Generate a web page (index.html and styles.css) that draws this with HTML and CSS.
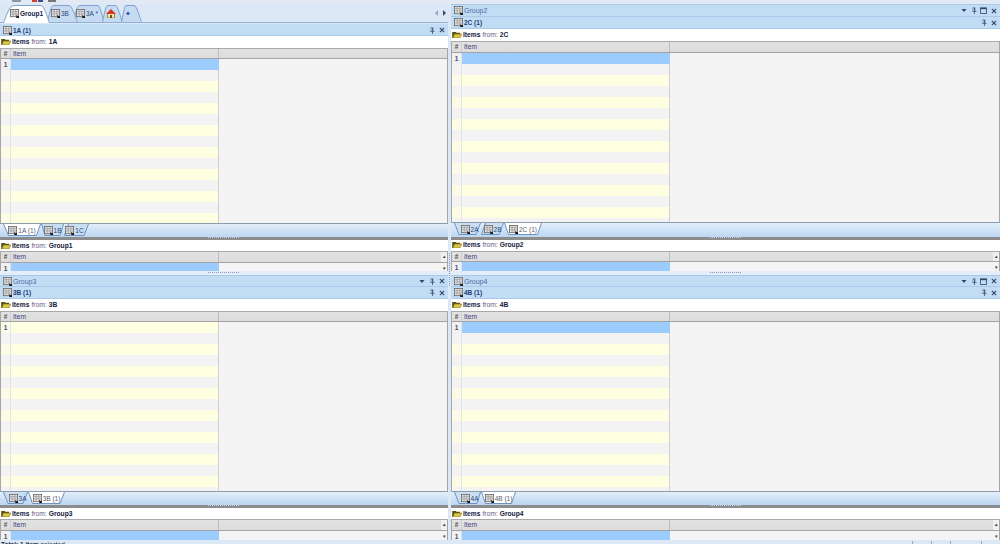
FILE: index.html
```html
<!DOCTYPE html>
<html lang="en">
<head>
<meta charset="utf-8">
<title>Groups</title>
<link rel="stylesheet" href="styles.css">
</head>
<body>
<svg class="defs">
  <symbol id="doc" viewBox="0 0 10 10">
    <rect x=".5" y=".5" width="9" height="8" fill="#e8e8e8" stroke="#6c6c6c"/>
    <path d="M.5 3h9M.5 5.500h9M3.500 .5v8M6.500 .5v8" stroke="#a2a2a2" fill="none"/>
    <path d="M7 7h1v1h2v2H7z" fill="#111"/>
  </symbol>
  <symbol id="folder" viewBox="0 0 11 8">
    <path d="M0 1h4l1 1h4v2H3L1 8H0z" fill="#5a5410"/>
    <path d="M2.500 3.500H11L8.800 8H.8z" fill="#d9c64a" stroke="#6b6215" stroke-width=".6"/>
  </symbol>
  <symbol id="pin" viewBox="0 0 7 8"><path d="M2 .5h3v4h1.500v1h-2V8h-1V5.500h-2v-1H2z" fill="#46597c"/><path d="M3 1.500v3" stroke="#c2dcf4"/></symbol>
  <symbol id="close" viewBox="0 0 7 7"><path d="M1 1l5 5M6 1L1 6" stroke="#34496e" stroke-width="1.300" fill="none"/></symbol>
  <symbol id="drop" viewBox="0 0 7 4"><path d="M0 0h7L3.500 4z" fill="#34496e"/></symbol>
  <symbol id="max" viewBox="0 0 8 8"><path d="M.5 1.500h7v6h-7z" fill="none" stroke="#34496e"/><path d="M0 1.500h8" stroke="#34496e" stroke-width="2"/></symbol>
</svg>

<div class="topbar">
  <span class="tool t1"></span><span class="tool t2"></span><span class="tool t3"></span><span class="tool t4"></span>
</div>

<main class="main">
  <div class="col col-left">
    <div class="strip">
      <div class="tab tab-group1 active">
        <svg class="shape" viewBox="0 0 47 18"><path d="M.5 18C3 12 6 .5 11 .5H38C41 .5 44 11 46.500 18"/></svg>
        <svg class="ico"><use href="#doc"/></svg><span class="tab-bold">Group1</span>
      </div>
      <div class="tab tab-3b">
        <svg class="shape" viewBox="0 0 31 17"><path d="M.5 17C2 12 3 .5 7 .5H22C25 .5 28 11 30.500 17"/></svg>
        <svg class="ico"><use href="#doc"/></svg><span>3B</span>
      </div>
      <div class="tab tab-3a">
        <svg class="shape" viewBox="0 0 32 17"><path d="M.5 17C2 12 3 .5 7 .5H25C27 .5 29 11 31.500 17"/></svg>
        <svg class="ico"><use href="#doc"/></svg><span>3A *</span>
      </div>
      <div class="tab tab-home">
        <svg class="shape" viewBox="0 0 21 17"><path d="M.5 17C2 12 3 .5 6 .5H13C16 .5 18 11 20.500 17"/></svg>
        <svg class="home" viewBox="0 0 10 9"><path d="M1.500 4.500V9h7V4.500z" fill="#f4e7a8" stroke="#7c6a1f" stroke-width=".7"/><path d="M0 5l5-5 5 5z" fill="#d8351f"/><path d="M4 6h2v3H4z" fill="#69541a"/></svg>
      </div>
      <div class="tab tab-plus">
        <svg class="shape" viewBox="0 0 21 17"><path d="M.5 17C2 12 3 .5 5 .5H13C16 .5 18 11 20.500 17"/></svg>
        <span class="plus">✦</span>
      </div>
      <div class="nav"><span class="arrow-l"></span><span class="arrow-r"></span></div>
    </div>

    <section class="pane pane-a">
      <div class="band"><svg class="ico"><use href="#doc"/></svg><span class="title">1A (1)</span><div class="btns"><svg class="b-pin"><use href="#pin"/></svg><svg class="b-x"><use href="#close"/></svg></div></div>
      <div class="items"><svg class="fld"><use href="#folder"/></svg><b>Items</b><span class="from">from:</span><b>1A</b></div>
      <div class="grid rows-a">
        <div class="head"><span class="h-idx">#</span><span class="h-item">Item</span><span class="h-rest"></span></div>
        <div class="row sel"><span class="idx">1</span><span class="cell"></span></div>
        <div class="row g"><span class="idx"></span><span class="cell"></span></div>
        <div class="row y"><span class="idx"></span><span class="cell"></span></div>
        <div class="row g"><span class="idx"></span><span class="cell"></span></div>
        <div class="row y"><span class="idx"></span><span class="cell"></span></div>
        <div class="row g"><span class="idx"></span><span class="cell"></span></div>
        <div class="row y"><span class="idx"></span><span class="cell"></span></div>
        <div class="row g"><span class="idx"></span><span class="cell"></span></div>
        <div class="row y"><span class="idx"></span><span class="cell"></span></div>
        <div class="row g"><span class="idx"></span><span class="cell"></span></div>
        <div class="row y"><span class="idx"></span><span class="cell"></span></div>
        <div class="row g"><span class="idx"></span><span class="cell"></span></div>
        <div class="row y"><span class="idx"></span><span class="cell"></span></div>
        <div class="row g"><span class="idx"></span><span class="cell"></span></div>
        <div class="row y"><span class="idx"></span><span class="cell"></span></div>
      </div>
      <div class="dtabs">
        <div class="dtab active w38"><svg class="dshape" viewBox="0 0 38 12"><path d="M.5 0L5.500 11.500H33.500L37.500 0"/></svg><svg class="ico"><use href="#doc"/></svg><span>1A (1)</span></div>
        <div class="dtab w23"><svg class="dshape" viewBox="0 0 23 12"><path d="M.5 0L4 11.500H19L22.500 0"/></svg><svg class="ico"><use href="#doc"/></svg><span>1B</span></div>
        <div class="dtab w25 shift-l"><svg class="dshape" viewBox="0 0 25 12"><path d="M4.500 0L.5 11.500H20L24.500 0"/></svg><svg class="ico"><use href="#doc"/></svg><span>1C</span></div>
      </div>
      <div class="thick"><span class="dots"></span></div>
      <div class="items"><svg class="fld"><use href="#folder"/></svg><b>Items</b><span class="from">from:</span><b>Group1</b></div>
      <div class="grid rows-low">
        <div class="head"><span class="h-idx">#</span><span class="h-item">Item</span><span class="h-rest"></span><span class="h-scroll">▴</span></div>
        <div class="row sel"><span class="idx">1</span><span class="cell"></span><span class="r-scroll">▾</span></div>
      </div>
    </section>

    <div class="hsplit"><span class="dots"></span></div>

    <section class="pane pane-b">
      <div class="band band-group"><svg class="ico"><use href="#doc"/></svg><span class="gname">Group3</span><div class="btns"><svg class="b-drop"><use href="#drop"/></svg><svg class="b-pin"><use href="#pin"/></svg><svg class="b-x"><use href="#close"/></svg></div></div>
      <div class="band"><svg class="ico"><use href="#doc"/></svg><span class="title">3B (1)</span><div class="btns"><svg class="b-pin"><use href="#pin"/></svg><svg class="b-x"><use href="#close"/></svg></div></div>
      <div class="items"><svg class="fld"><use href="#folder"/></svg><b>Items</b><span class="from">from:</span><b>3B</b></div>
      <div class="grid rows-b">
        <div class="head"><span class="h-idx">#</span><span class="h-item">Item</span><span class="h-rest"></span></div>
        <div class="row y"><span class="idx">1</span><span class="cell"></span></div>
        <div class="row g"><span class="idx"></span><span class="cell"></span></div>
        <div class="row y"><span class="idx"></span><span class="cell"></span></div>
        <div class="row g"><span class="idx"></span><span class="cell"></span></div>
        <div class="row y"><span class="idx"></span><span class="cell"></span></div>
        <div class="row g"><span class="idx"></span><span class="cell"></span></div>
        <div class="row y"><span class="idx"></span><span class="cell"></span></div>
        <div class="row g"><span class="idx"></span><span class="cell"></span></div>
        <div class="row y"><span class="idx"></span><span class="cell"></span></div>
        <div class="row g"><span class="idx"></span><span class="cell"></span></div>
        <div class="row y"><span class="idx"></span><span class="cell"></span></div>
        <div class="row g"><span class="idx"></span><span class="cell"></span></div>
        <div class="row y"><span class="idx"></span><span class="cell"></span></div>
        <div class="row g"><span class="idx"></span><span class="cell"></span></div>
        <div class="row y"><span class="idx"></span><span class="cell"></span></div>
        <div class="row g"><span class="idx"></span><span class="cell"></span></div>
      </div>
      <div class="dtabs">
        <div class="dtab w25 shift-r"><svg class="dshape" viewBox="0 0 25 12"><path d="M.5 0L5 11.500H20L24.500 0"/></svg><svg class="ico"><use href="#doc"/></svg><span>3A</span></div>
        <div class="dtab active w37"><svg class="dshape" viewBox="0 0 37 12"><path d="M.5 0L4.500 11.500H32L36.500 0"/></svg><svg class="ico"><use href="#doc"/></svg><span>3B (1)</span></div>
      </div>
      <div class="thick"><span class="dots"></span></div>
      <div class="items"><svg class="fld"><use href="#folder"/></svg><b>Items</b><span class="from">from:</span><b>Group3</b></div>
      <div class="grid rows-low">
        <div class="head"><span class="h-idx">#</span><span class="h-item">Item</span><span class="h-rest"></span><span class="h-scroll">▴</span></div>
        <div class="row sel"><span class="idx">1</span><span class="cell"></span><span class="r-scroll">▾</span></div>
      </div>
    </section>
  </div>

  <div class="vsplit"><span class="vdots"></span></div>

  <div class="col col-right">
    <section class="pane pane-c">
      <div class="band band-group"><svg class="ico"><use href="#doc"/></svg><span class="gname">Group2</span><div class="btns"><svg class="b-drop"><use href="#drop"/></svg><svg class="b-pin"><use href="#pin"/></svg><svg class="b-max"><use href="#max"/></svg><svg class="b-x"><use href="#close"/></svg></div></div>
      <div class="band"><svg class="ico"><use href="#doc"/></svg><span class="title">2C (1)</span><div class="btns"><svg class="b-pin"><use href="#pin"/></svg><svg class="b-x"><use href="#close"/></svg></div></div>
      <div class="items"><svg class="fld"><use href="#folder"/></svg><b>Items</b><span class="from">from:</span><b>2C</b></div>
      <div class="grid rows-c">
        <div class="head"><span class="h-idx">#</span><span class="h-item">Item</span><span class="h-rest"></span></div>
        <div class="row sel"><span class="idx">1</span><span class="cell"></span></div>
        <div class="row g"><span class="idx"></span><span class="cell"></span></div>
        <div class="row y"><span class="idx"></span><span class="cell"></span></div>
        <div class="row g"><span class="idx"></span><span class="cell"></span></div>
        <div class="row y"><span class="idx"></span><span class="cell"></span></div>
        <div class="row g"><span class="idx"></span><span class="cell"></span></div>
        <div class="row y"><span class="idx"></span><span class="cell"></span></div>
        <div class="row g"><span class="idx"></span><span class="cell"></span></div>
        <div class="row y"><span class="idx"></span><span class="cell"></span></div>
        <div class="row g"><span class="idx"></span><span class="cell"></span></div>
        <div class="row y"><span class="idx"></span><span class="cell"></span></div>
        <div class="row g"><span class="idx"></span><span class="cell"></span></div>
        <div class="row y"><span class="idx"></span><span class="cell"></span></div>
        <div class="row g"><span class="idx"></span><span class="cell"></span></div>
        <div class="row y"><span class="idx"></span><span class="cell"></span></div>
        <div class="row g"><span class="idx"></span><span class="cell"></span></div>
      </div>
      <div class="dtabs">
        <div class="dtab w27 shift-r"><svg class="dshape" viewBox="0 0 27 12"><path d="M.5 0L5 11.500H22L26.500 0"/></svg><svg class="ico"><use href="#doc"/></svg><span>2A</span></div>
        <div class="dtab w23"><svg class="dshape" viewBox="0 0 23 12"><path d="M4.500 0L.5 11.500H18L22.500 0"/></svg><svg class="ico"><use href="#doc"/></svg><span>2B</span></div>
        <div class="dtab active w38"><svg class="dshape" viewBox="0 0 38 12"><path d="M.5 0L4.500 11.500H33.500L37.500 0"/></svg><svg class="ico"><use href="#doc"/></svg><span>2C (1)</span></div>
      </div>
      <div class="thick"><span class="dots"></span></div>
      <div class="items"><svg class="fld"><use href="#folder"/></svg><b>Items</b><span class="from">from:</span><b>Group2</b></div>
      <div class="grid rows-low">
        <div class="head"><span class="h-idx">#</span><span class="h-item">Item</span><span class="h-rest"></span><span class="h-scroll">▴</span></div>
        <div class="row sel"><span class="idx">1</span><span class="cell"></span><span class="r-scroll">▾</span></div>
      </div>
    </section>

    <div class="hsplit"><span class="dots"></span></div>

    <section class="pane pane-b">
      <div class="band band-group"><svg class="ico"><use href="#doc"/></svg><span class="gname">Group4</span><div class="btns"><svg class="b-drop"><use href="#drop"/></svg><svg class="b-pin"><use href="#pin"/></svg><svg class="b-max"><use href="#max"/></svg><svg class="b-x"><use href="#close"/></svg></div></div>
      <div class="band"><svg class="ico"><use href="#doc"/></svg><span class="title">4B (1)</span><div class="btns"><svg class="b-pin"><use href="#pin"/></svg><svg class="b-x"><use href="#close"/></svg></div></div>
      <div class="items"><svg class="fld"><use href="#folder"/></svg><b>Items</b><span class="from">from:</span><b>4B</b></div>
      <div class="grid rows-b">
        <div class="head"><span class="h-idx">#</span><span class="h-item">Item</span><span class="h-rest"></span></div>
        <div class="row sel"><span class="idx">1</span><span class="cell"></span></div>
        <div class="row g"><span class="idx"></span><span class="cell"></span></div>
        <div class="row y"><span class="idx"></span><span class="cell"></span></div>
        <div class="row g"><span class="idx"></span><span class="cell"></span></div>
        <div class="row y"><span class="idx"></span><span class="cell"></span></div>
        <div class="row g"><span class="idx"></span><span class="cell"></span></div>
        <div class="row y"><span class="idx"></span><span class="cell"></span></div>
        <div class="row g"><span class="idx"></span><span class="cell"></span></div>
        <div class="row y"><span class="idx"></span><span class="cell"></span></div>
        <div class="row g"><span class="idx"></span><span class="cell"></span></div>
        <div class="row y"><span class="idx"></span><span class="cell"></span></div>
        <div class="row g"><span class="idx"></span><span class="cell"></span></div>
        <div class="row y"><span class="idx"></span><span class="cell"></span></div>
        <div class="row g"><span class="idx"></span><span class="cell"></span></div>
        <div class="row y"><span class="idx"></span><span class="cell"></span></div>
        <div class="row g"><span class="idx"></span><span class="cell"></span></div>
      </div>
      <div class="dtabs">
        <div class="dtab w27 shift-r"><svg class="dshape" viewBox="0 0 27 12"><path d="M.5 0L5 11.500H23L26.500 0"/></svg><svg class="ico"><use href="#doc"/></svg><span>4A</span></div>
        <div class="dtab active w35"><svg class="dshape" viewBox="0 0 35 12"><path d="M.5 0L4.500 11.500H30.500L34.500 0"/></svg><svg class="ico"><use href="#doc"/></svg><span>4B (1)</span></div>
      </div>
      <div class="thick"><span class="dots"></span></div>
      <div class="items"><svg class="fld"><use href="#folder"/></svg><b>Items</b><span class="from">from:</span><b>Group4</b></div>
      <div class="grid rows-low">
        <div class="head"><span class="h-idx">#</span><span class="h-item">Item</span><span class="h-rest"></span><span class="h-scroll">▴</span></div>
        <div class="row sel"><span class="idx">1</span><span class="cell"></span><span class="r-scroll">▾</span></div>
      </div>
    </section>
  </div>
</main>

<footer class="status">
  <span class="st-text"><b>Total: 1 item</b> selected</span>
  <span class="st-cell c1"></span><span class="st-cell c2"></span><span class="st-cell c3"></span><span class="st-cell c4"></span>
</footer>
</body>
</html>
```

FILE: styles.css
```css
* { box-sizing: border-box; }
html, body { margin: 0; height: 544px; overflow: hidden; }
body {
  background: #dce8f6;
  font-family: "Liberation Sans", Arial, sans-serif;
  font-size: 6.5px;
  line-height: 11px;
  color: #1b2a4a;
  display: flex;
  flex-direction: column;
}
.defs { display: none; }
svg { display: block; }

.topbar { height: 4px; flex: none; display: flex; padding-left: 12px; gap: 5px; background: #e1e9f5; overflow: hidden; }
.tool { width: 9px; height: 2px; background: #8b97a8; }
.t2 { width: 5px; background: #d33b3b; margin-left: 6px; }
.t3 { width: 5px; background: #3a4f86; margin-left: -4px; }
.t4 { width: 8px; background: #777; }

.main { flex: none; height: 537px; display: flex; overflow: hidden; }
.col { display: flex; flex-direction: column; }
.col-left { width: 448px; flex: none; }
.col-right { flex: 1; min-width: 0; }
.vsplit { width: 3px; flex: none; background: #dce8f6; padding: 249px 1px 0; }
.vdots { display: block; width: 1px; height: 34px; background: repeating-linear-gradient(#7f9cc4 0 1px, transparent 1px 2px); }

/* main tab strip */
.strip { height: 19px; flex: none; display: flex; align-items: flex-end; padding-left: 3px; border-bottom: 1px solid #8fb0d8; margin-bottom: 1px; }
.tab { height: 17px; flex: none; display: flex; align-items: center; position: relative; color: #2c4a7a; padding-bottom: 1px; }
.tab > * { position: relative; }
.tab .shape { position: absolute; left: 0; top: 0; width: 100%; height: 100%; }
.shape path { fill: #c6dbf2; stroke: #7ea2cc; stroke-width: 1; }
.tab.active .shape path { fill: #fff; }
.tab.active { z-index: 2; margin-bottom: -1px; height: 18px; color: #13233f; padding-bottom: 2px; }
.tab-bold { font-weight: bold; }
.tab .ico { width: 9px; height: 9px; margin-right: 1px; }
.tab-group1 { width: 47px; padding-left: 7px; }
.tab-3b { width: 31px; margin-left: -3px; padding-left: 4px; z-index: 1; }
.tab-3a { width: 32px; margin-left: -5px; padding-left: 3px; }
.tab-home { width: 21px; margin-left: -3px; padding-left: 4px; }
.home { width: 10px; height: 9px; }
.tab-plus { width: 21px; margin-left: -2px; padding-left: 4px; }
.plus { color: #1d3fa8; font-size: 7px; }
.nav { margin-left: auto; margin-right: 2px; align-self: center; display: flex; gap: 5px; }
.arrow-l { width: 0; height: 0; border: 3px solid transparent; border-left: 0; border-right: 3px solid #9aa6b7; }
.arrow-r { width: 0; height: 0; border: 3px solid transparent; border-right: 0; border-left: 3px solid #34496e; }

/* panes */
.pane { flex: none; display: flex; flex-direction: column; overflow: hidden; }
.pane-a { height: 247px; }
.pane-b { height: 266px; }
.pane-c { height: 267px; }
.band { height: 12px; flex: none; display: flex; align-items: center; background: #c2dcf4; border-bottom: 1px solid #a9c9ea; padding: 0 2px 0 3px; }
.pane-a .band { padding-top: 1px; }
.band-group { border-top: 1px solid #a9c9ea; }
.pane-c .band-group { height: 13px; }
.band .ico { width: 9px; height: 9px; margin-right: 1px; }
.title { font-weight: bold; color: #1f3f78; }
.gname { color: #4a6ca5; font-size: 7px; }
.btns { margin-left: auto; display: flex; align-items: center; }
.btns svg { flex: none; }
.b-drop { width: 6px; height: 3px; margin-right: 4px; }
.b-pin { width: 6px; height: 7px; margin-right: 3px; }
.b-max { width: 7px; height: 7px; margin-right: 3px; }
.b-x { width: 6px; height: 6px; margin-right: 1px; margin-left: 1px; }

.items { height: 12px; flex: none; display: flex; align-items: center; background: #fff; gap: 2px; padding: 0 0 1px 1px; color: #12203c; font-size: 6.7px; }
.thick + .items { height: 11px; padding-bottom: 0; }
.pane-c .thick + .items { padding-bottom: 2px; }
.fld { width: 10px; height: 7px; margin-right: -1px; }
.from { color: #6a557f; }

.grid { flex: none; overflow: hidden; border-left: 1px solid #a6a6a6; border-right: 1px solid #a6a6a6; background: #f4f4f4; }
.rows-a { height: 176px; border-bottom: 1px solid #8d9bab; }
.rows-b { height: 181px; border-bottom: 1px solid #8d9bab; }
.rows-c { height: 182px; border-bottom: 1px solid #8d9bab; }
.rows-low { height: 20px; }
.pane-b .rows-low { height: 21px; }
.head { height: 11px; flex: none; display: flex; background: linear-gradient(#e2e2e2, #dcdcdc); border-top: 1px solid #a9a9a9; border-bottom: 1px solid #a3a3a3; }
.pane-c .rows-c .head, .pane-a .rows-low .head, .pane-b .rows-low .head { height: 12px; }
.head span { display: block; line-height: 9px; }
.h-idx { width: 10px; flex: none; text-align: center; font-weight: bold; color: #4d4d4d; border-right: 1px solid #cfcfcf; }
.h-item { width: 208px; flex: none; padding-left: 2px; color: #473c80; border-right: 1px solid #bdbdbd; font-size: 6.7px; }
.h-rest { flex: 1; }
.h-scroll { width: 6px; flex: none; font-size: 5px; color: #333; background: #f0f0f0; text-align: center; }
.row { height: 11px; display: flex; }
.idx { width: 10px; flex: none; text-align: center; color: #3a4f78; font-weight: bold; border-right: 1px solid #e3e3e3; }
.cell { width: 208px; flex: none; border-right: 1px solid #d0d0d0; }
.r-scroll { margin-left: auto; width: 6px; font-size: 5px; color: #333; text-align: center; background: #f4f4f4; }
.sel .cell { background: #9ccbfd; border-right-color: #9ccbfd; }
.sel .idx { background: #f0f0f0; }
.g .cell, .g .idx { background: #f3f3f3; }
.y .cell { background: #fefee0; }
.y .idx { background: #fbfbe6; }

/* document tabs */
.dtabs { height: 13px; flex: none; display: flex; padding-left: 3px; background: linear-gradient(#e3eefa, #bcd6f1); }
.pane-c .dtabs { height: 14px; }
.dtab { height: 12px; flex: none; display: flex; align-items: center; justify-content: center; gap: 1px; position: relative; color: #2c4a7a; }
.dtab > * { position: relative; }
.dtab .dshape { position: absolute; left: 0; top: 0; width: 100%; height: 100%; }
.dshape path { fill: #c9ddf3; stroke: #6e93c2; }
.dtab.active .dshape path { fill: #fff; }
.dtab .ico { width: 9px; height: 9px; }
.dtab.active { color: #5a5a6e; }
.w38 { width: 38px; }
.w37 { width: 37px; }
.w35 { width: 35px; }
.w27 { width: 27px; }
.w25 { width: 25px; }
.w23 { width: 23px; }
.shift-r { padding-left: 4px; }
.shift-l { padding-right: 4px; }
.thick { height: 3px; flex: none; background: #8c8c8c; display: flex; justify-content: center; }
.dots { display: block; width: 32px; height: 1px; background: repeating-linear-gradient(90deg, #c5d3e6 0 1px, transparent 1px 2px); }
.hsplit { height: 4px; flex: none; background: #e4edf8; display: flex; justify-content: center; padding-top: 1px; }
.hsplit .dots { background: repeating-linear-gradient(90deg, #7f9cc4 0 1px, transparent 1px 2px); }

/* status bar */
.status { height: 3px; flex: none; display: flex; background: #dce8f6; overflow: hidden; }
.st-text { color: #1b2a4a; line-height: 8px; padding-left: 1px; }
.st-cell { width: 1px; height: 3px; background: #9aa8bb; flex: none; }
.c1 { margin-left: auto; }
.c2 { margin-left: 18px; }
.c3 { margin-left: 18px; }
.c4 { margin-left: 30px; margin-right: 18px; }
```
